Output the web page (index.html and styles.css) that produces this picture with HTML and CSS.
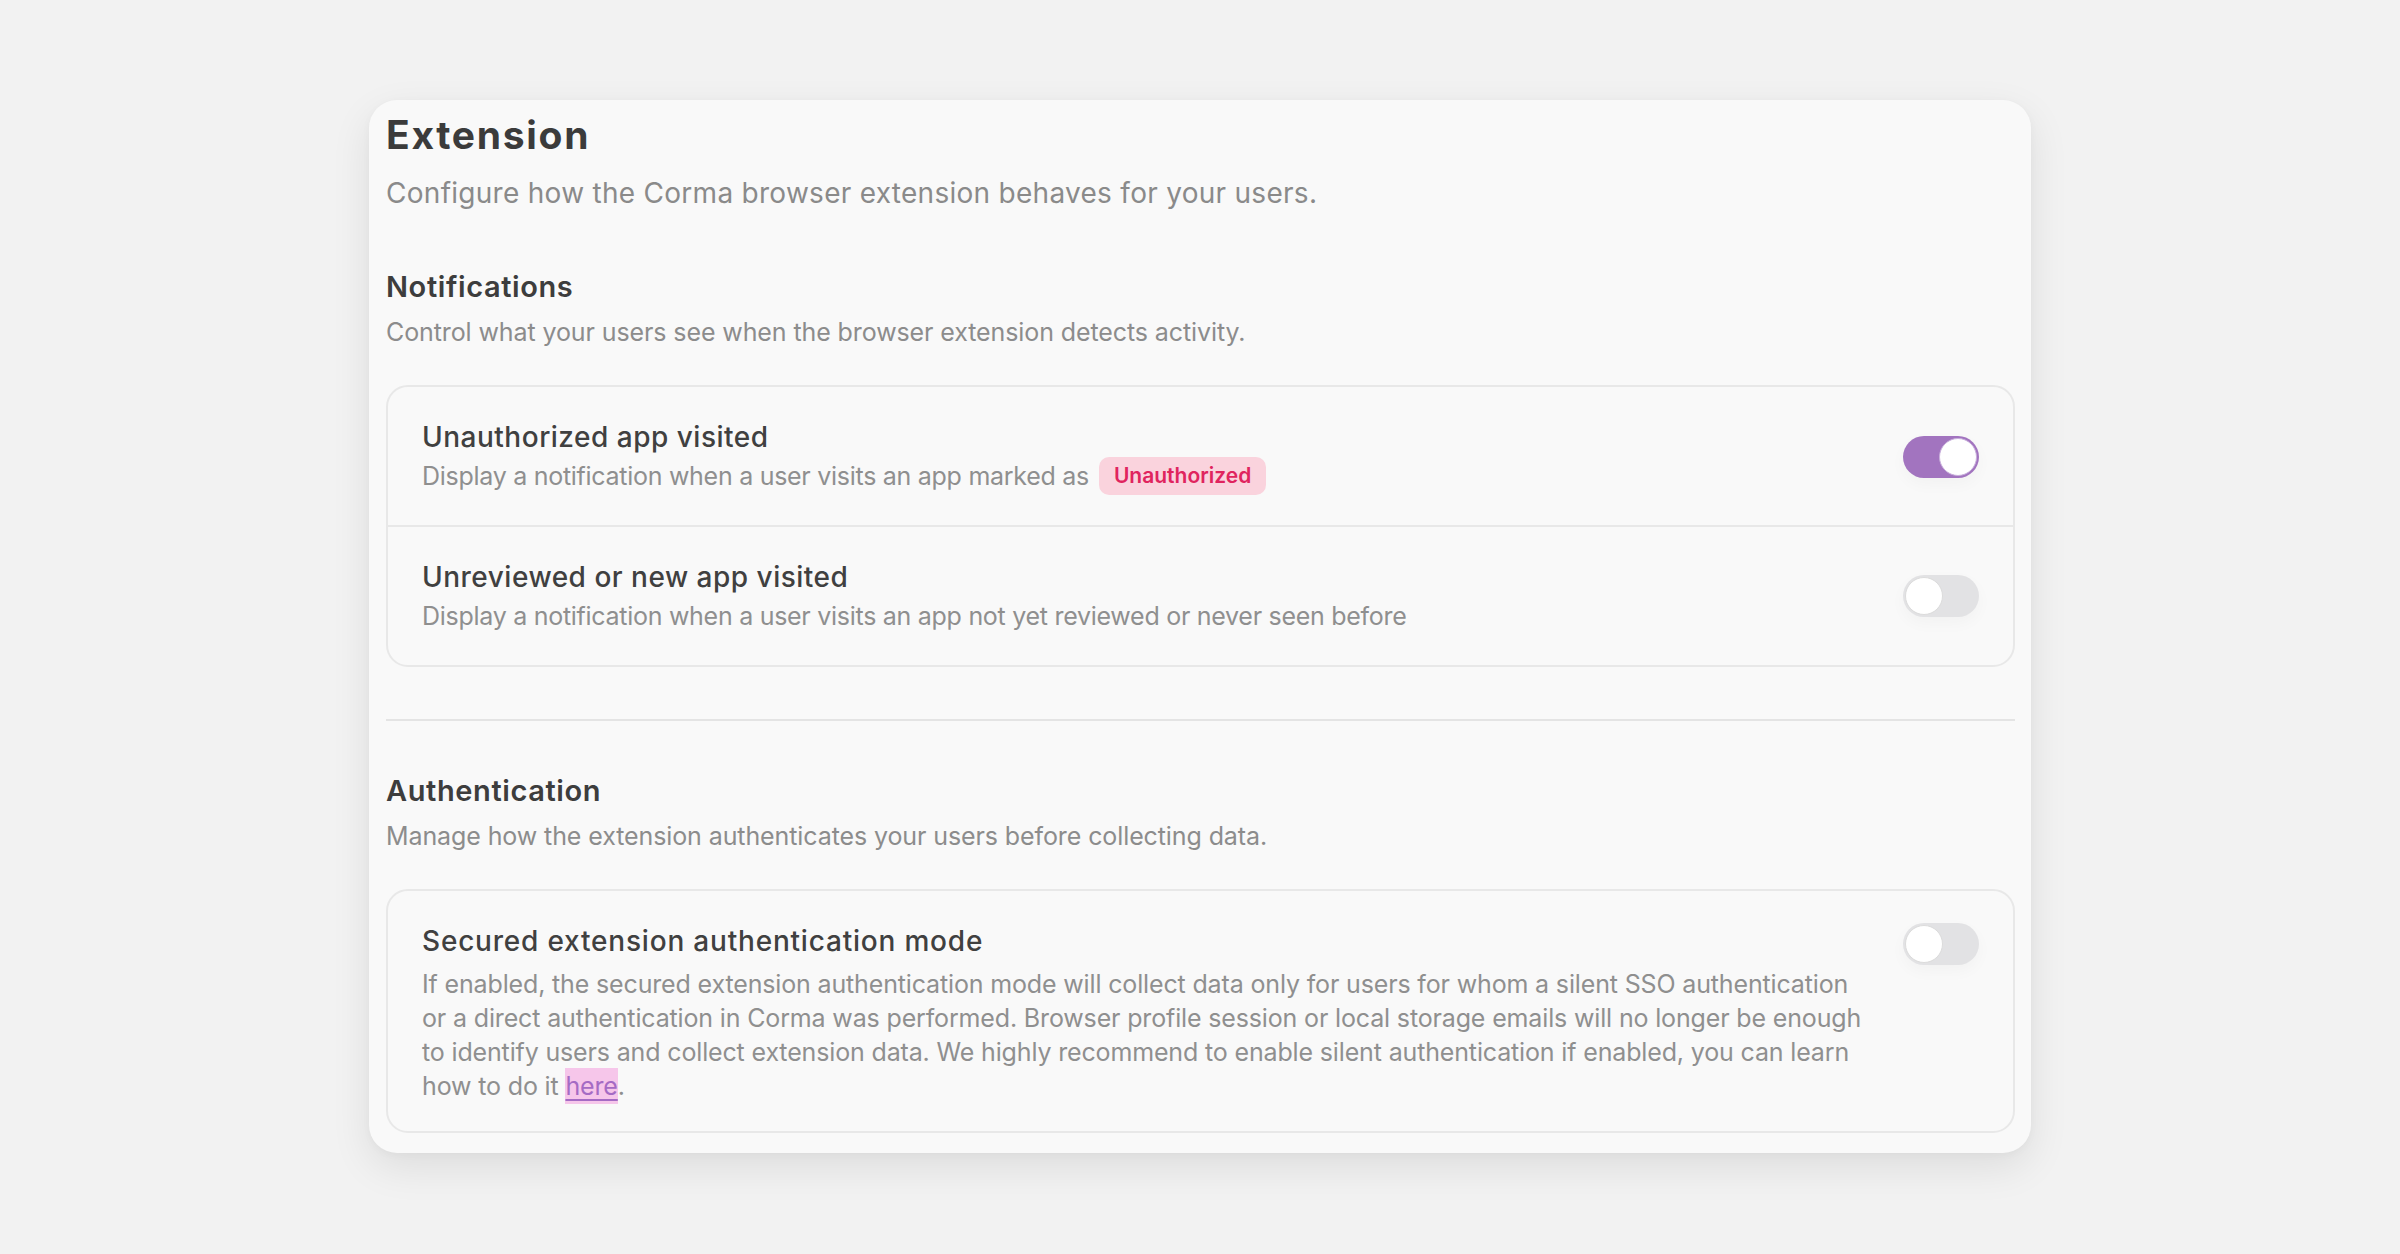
FILE: index.html
```html
<!DOCTYPE html>
<html lang="en">
<head>
<meta charset="utf-8">
<title>Extension settings</title>
<link rel="stylesheet" href="styles.css">
</head>
<body>
<main class="card">
  <header class="page-head">
    <h1 class="title">Extension</h1>
    <p class="subtitle">Configure how the Corma browser extension behaves for your users.</p>
  </header>

  <section class="section">
    <h2 class="section-title">Notifications</h2>
    <p class="section-desc">Control what your users see when the browser extension detects activity.</p>
    <div class="box">
      <div class="row row-badge">
        <div class="row-text">
          <div class="row-title">Unauthorized app visited</div>
          <div class="row-desc with-badge"><span>Display a notification when a user visits an app marked as</span><span class="badge">Unauthorized</span></div>
        </div>
        <span class="toggle on"><span class="knob"></span></span>
      </div>
      <div class="row">
        <div class="row-text">
          <div class="row-title">Unreviewed or new app visited</div>
          <div class="row-desc">Display a notification when a user visits an app not yet reviewed or never seen before</div>
        </div>
        <span class="toggle"><span class="knob"></span></span>
      </div>
    </div>
  </section>

  <hr class="sep">

  <section class="section after-sep">
    <h2 class="section-title">Authentication</h2>
    <p class="section-desc">Manage how the extension authenticates your users before collecting data.</p>
    <div class="box">
      <div class="row row-top">
        <div class="row-text">
          <div class="row-title title-long">Secured extension authentication mode</div>
          <p class="row-para">If enabled, the secured extension authentication mode will collect data only for users for whom a silent SSO authentication or a direct authentication in Corma was performed. Browser profile session or local storage emails will no longer be enough to identify users and collect extension data. We highly recommend to enable silent authentication if enabled, you can learn how to do it <a class="link" href="#">here</a>.</p>
        </div>
        <span class="toggle"><span class="knob"></span></span>
      </div>
    </div>
  </section>
</main>
</body>
</html>
```

FILE: styles.css
```css
* { box-sizing: border-box; }

html, body {
  margin: 0;
  padding: 0;
  background: #f2f2f2;
}

body {
  font-family: Inter, "Noto Sans", "Liberation Sans", sans-serif;
  color: #3d3d3d;
  padding-top: 100px;
  min-height: 1254px;
}

.card {
  width: 1662px;
  margin: 0 auto;
  background: #f9f9f9;
  border-radius: 28px;
  padding: 12px 16px 20px 17px;
  box-shadow: 0 14px 40px rgba(0, 0, 0, 0.09), 0 2px 8px rgba(0, 0, 0, 0.03);
}

.title {
  margin: 0;
  font-size: 39px;
  line-height: 46px;
  font-weight: 700;
  letter-spacing: 1.7px;
  color: #3b3b3b;
}

.subtitle {
  margin: 17px 0 0;
  font-size: 28px;
  line-height: 36px;
  letter-spacing: 0.28px;
  color: #8a8a8a;
}

.section { margin-top: 58px; }

.section-title {
  margin: 0;
  font-size: 29px;
  line-height: 36px;
  font-weight: 600;
  letter-spacing: 0.6px;
  color: #3d3d3d;
}

.section-desc {
  margin: 11px 0 0;
  font-size: 25px;
  line-height: 32px;
  letter-spacing: -0.1px;
  color: #8c8c8c;
}

.box {
  margin-top: 37px;
  border: 2px solid #e8e8e8;
  border-radius: 22px;
  background: #f9f9f9;
}

.row {
  display: flex;
  align-items: center;
  justify-content: space-between;
  gap: 30px;
  padding: 32px 34px 33px 34px;
}

.row + .row { border-top: 2px solid #e8e8e8; }

.row-badge { padding-bottom: 30px; }

.row-top {
  align-items: flex-start;
  padding: 32px 34px 28px 34px;
}

.row-text { flex: 1; min-width: 0; }

.row-title {
  font-size: 28px;
  line-height: 36px;
  font-weight: 500;
  letter-spacing: 0.5px;
  color: #404040;
}

.row-title.title-long { letter-spacing: 0.8px; }

.row-desc {
  margin-top: 5px;
  font-size: 25px;
  line-height: 32px;
  letter-spacing: -0.28px;
  color: #8f8f8f;
}

.row-desc.with-badge {
  margin-top: 2px;
  display: flex;
  align-items: center;
  gap: 10px;
}

.row-para {
  margin: 8px 0 0;
  font-size: 25px;
  line-height: 34px;
  letter-spacing: -0.15px;
  color: #8f8f8f;
  max-width: 1448px;
}

.badge {
  display: inline-block;
  padding: 0 15px;
  height: 38px;
  line-height: 38px;
  border-radius: 10px;
  background: #fad3dd;
  color: #e0245e;
  font-size: 21px;
  font-weight: 600;
  letter-spacing: 0;
}

.link {
  color: #a56bc4;
  background: #f6c6ea;
  box-shadow: 0 3px 0 #f6c6ea, 0 -3px 0 #f6c6ea;
  text-decoration: underline;
  text-decoration-thickness: 2px;
  text-underline-offset: 4px;
}

.toggle {
  flex: none;
  position: relative;
  width: 76px;
  height: 42px;
  border-radius: 21px;
  background: #e2e2e4;
  box-shadow: 0 6px 16px rgba(0, 0, 0, 0.03);
}

.toggle .knob {
  position: absolute;
  top: 2px;
  left: 2px;
  width: 38px;
  height: 38px;
  border-radius: 50%;
  background: #fff;
  border: 1px solid #dcdcdc;
}

.toggle.on { background: #a274bf; }

.toggle.on .knob {
  left: 36px;
  border-color: #c9b0dc;
}

.sep {
  margin: 52px 0 0;
  border: 0;
  height: 2px;
  background: #e4e4e4;
}

.section.after-sep { margin-top: 52px; }
```
